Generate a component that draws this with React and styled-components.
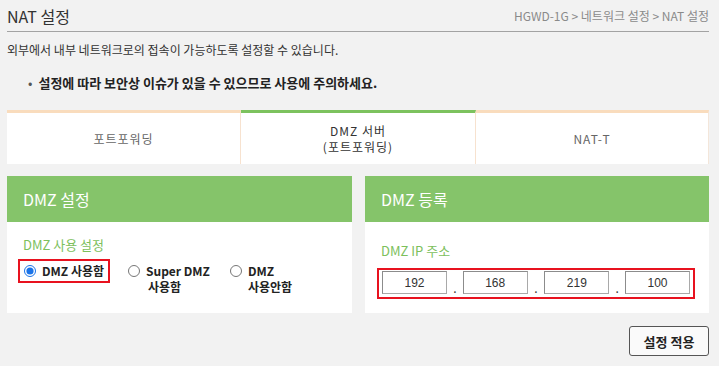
import React from 'react';
import styled, { createGlobalStyle } from 'styled-components';

const GlobalStyle = createGlobalStyle`
  html, body {
    margin: 0;
    padding: 0;
    background: #f2f2f2;
    font-family: "Noto Sans CJK KR", "Noto Sans", sans-serif;
    color: #222;
  }
`;

const Page = styled.div`
  width: 702px;
  padding: 0 10px 9px 7px;
`;

const TitleBar = styled.div`
  display: flex;
  justify-content: space-between;
  align-items: center;
  height: 31px;
  border-bottom: 1px solid #a3a3a3;
`;
const Title = styled.h1`
  margin: 0;
  font-size: 16px;
  font-weight: normal;
  color: #333;
  line-height: 28px;
`;
const Crumbs = styled.div`
  font-size: 12px;
  color: #8a8a8a;
  line-height: 28px;
`;

const Desc = styled.p`
  margin: 9px 0 0;
  font-size: 12px;
  line-height: 18px;
  color: #333;
`;
const Warn = styled.p`
  margin: 15px 0 0 21px;
  font-size: 13px;
  font-weight: bold;
  line-height: 18px;
  color: #222;
  &::before {
    content: '•';
    font-weight: normal;
    color: #555;
    margin-right: 6px;
  }
`;

const Tabs = styled.div`
  display: grid;
  grid-template-columns: 234px 235px 233px;
  margin-top: 18px;
`;
const Tab = styled.div`
  height: 51px;
  background: #fff;
  border-top: 3px solid ${p => (p.active ? '#7cc25e' : '#f9dcbd')};
  border-right: 1px solid ${p => (p.last ? '#f3e6da' : '#f7e2cf')};
  display: flex;
  align-items: center;
  justify-content: center;
  text-align: center;
  font-size: 12px;
  letter-spacing: 1px;
  line-height: 16px;
  color: ${p => (p.active ? '#333' : '#666')};
`;

const Panels = styled.div`
  display: grid;
  grid-template-columns: 345px 344px;
  column-gap: 13px;
  margin-top: 12px;
`;
const Panel = styled.div`
  background: #fff;
`;
const PanelHead = styled.div`
  height: 46px;
  background: #85c46a;
  color: #fff;
  font-size: 16px;
  display: flex;
  align-items: center;
  padding-left: 16px;
`;
const PanelBody = styled.div`
  height: 91px;
  padding: ${p => p.top || 14}px 0 0 16px;
  box-sizing: border-box;
`;
const FieldLabel = styled.div`
  font-size: 13px;
  line-height: 16px;
  color: #7cc05c;
`;

const RadioRow = styled.div`
  display: flex;
  align-items: flex-start;
  margin-top: 6px;
  margin-left: -5px;
`;
const Option = styled.label`
  display: flex;
  align-items: flex-start;
  gap: 6px;
  padding: 2px 0 2px 4px;
  margin-right: ${p => p.gap || 0}px;
  border: 2px solid ${p => (p.marked ? '#e8121f' : 'transparent')};
  width: ${p => p.width}px;
  box-sizing: border-box;
  font-size: 12px;
  font-weight: bold;
  color: #222;
`;
const OptionText = styled.span`
  display: flex;
  flex-direction: column;
`;
const OptionLine = styled.span`
  display: block;
  line-height: 16px;
  padding-left: ${p => p.indent || 0}px;
`;
const Radio = styled.input`
  margin: 0;
  width: 12px;
  height: 12px;
  accent-color: #1a73e8;
  flex-shrink: 0;
  margin-top: 2px;
`;

const IpBox = styled.div`
  display: flex;
  align-items: flex-end;
  width: 318px;
  height: 31px;
  box-sizing: border-box;
  border: 2px solid #e8121f;
  padding: 1px 3px 3px;
  margin-top: 9px;
  margin-left: -4px;
`;
const IpInput = styled.input`
  width: 65px;
  height: 23px;
  box-sizing: border-box;
  border: 1px solid #a9a9a9;
  border-top-color: #8c8c8c;
  border-left-color: #8c8c8c;
  text-align: center;
  font-size: 12px;
  font-family: "Liberation Sans", Arial, sans-serif;
  color: #333;
  padding: 0;
  background: #fff;
`;
const Dot = styled.span`
  width: ${p => p.w}px;
  text-align: center;
  font-size: 12px;
  line-height: 12px;
  color: #333;
`;

const Footer = styled.div`
  display: flex;
  justify-content: flex-end;
  margin-top: 13px;
`;
const ApplyButton = styled.button`
  width: 80px;
  height: 30px;
  border: 1px solid #555;
  border-radius: 3px;
  background: #fafafa;
  font-family: "Noto Sans CJK KR", sans-serif;
  font-size: 13px;
  font-weight: bold;
  color: #222;
  cursor: pointer;
`;

const ip = ['192', '168', '219', '100'];
const dotWidths = [16, 17, 16];

const options = [
  { lines: ['DMZ 사용함'], marked: true, width: 92, gap: 12, checked: true },
  { lines: ['Super DMZ', '사용함'], width: 102, indent: 2 },
  { lines: ['DMZ', '사용안함'], width: 80 },
];

export default function App() {
  return (
    <Page>
      <GlobalStyle />
      <TitleBar>
        <Title>NAT 설정</Title>
        <Crumbs>HGWD-1G &gt; 네트워크 설정 &gt; NAT 설정</Crumbs>
      </TitleBar>
      <Desc>외부에서 내부 네트워크로의 접속이 가능하도록 설정할 수 있습니다.</Desc>
      <Warn>설정에 따라 보안상 이슈가 있을 수 있으므로 사용에 주의하세요.</Warn>

      <Tabs>
        <Tab>포트포워딩</Tab>
        <Tab active>DMZ 서버<br />(포트포워딩)</Tab>
        <Tab last>NAT-T</Tab>
      </Tabs>

      <Panels>
        <Panel>
          <PanelHead>DMZ 설정</PanelHead>
          <PanelBody top={15}>
            <FieldLabel>DMZ 사용 설정</FieldLabel>
            <RadioRow>
              {options.map((o, i) => (
                <Option key={i} marked={o.marked} width={o.width} gap={o.gap}>
                  <Radio type="radio" name="dmz" defaultChecked={o.checked} />
                  <OptionText>
                    {o.lines.map((l, j) => (
                      <OptionLine key={j} indent={j > 0 ? o.indent : 0}>{l}</OptionLine>
                    ))}
                  </OptionText>
                </Option>
              ))}
            </RadioRow>
          </PanelBody>
        </Panel>
        <Panel>
          <PanelHead>DMZ 등록</PanelHead>
          <PanelBody top={21}>
            <FieldLabel>DMZ IP 주소</FieldLabel>
            <IpBox>
              {ip.map((v, i) => (
                <React.Fragment key={i}>
                  <IpInput defaultValue={v} />
                  {i < 3 && <Dot w={dotWidths[i]}>.</Dot>}
                </React.Fragment>
              ))}
            </IpBox>
          </PanelBody>
        </Panel>
      </Panels>

      <Footer>
        <ApplyButton>설정 적용</ApplyButton>
      </Footer>
    </Page>
  );
}
